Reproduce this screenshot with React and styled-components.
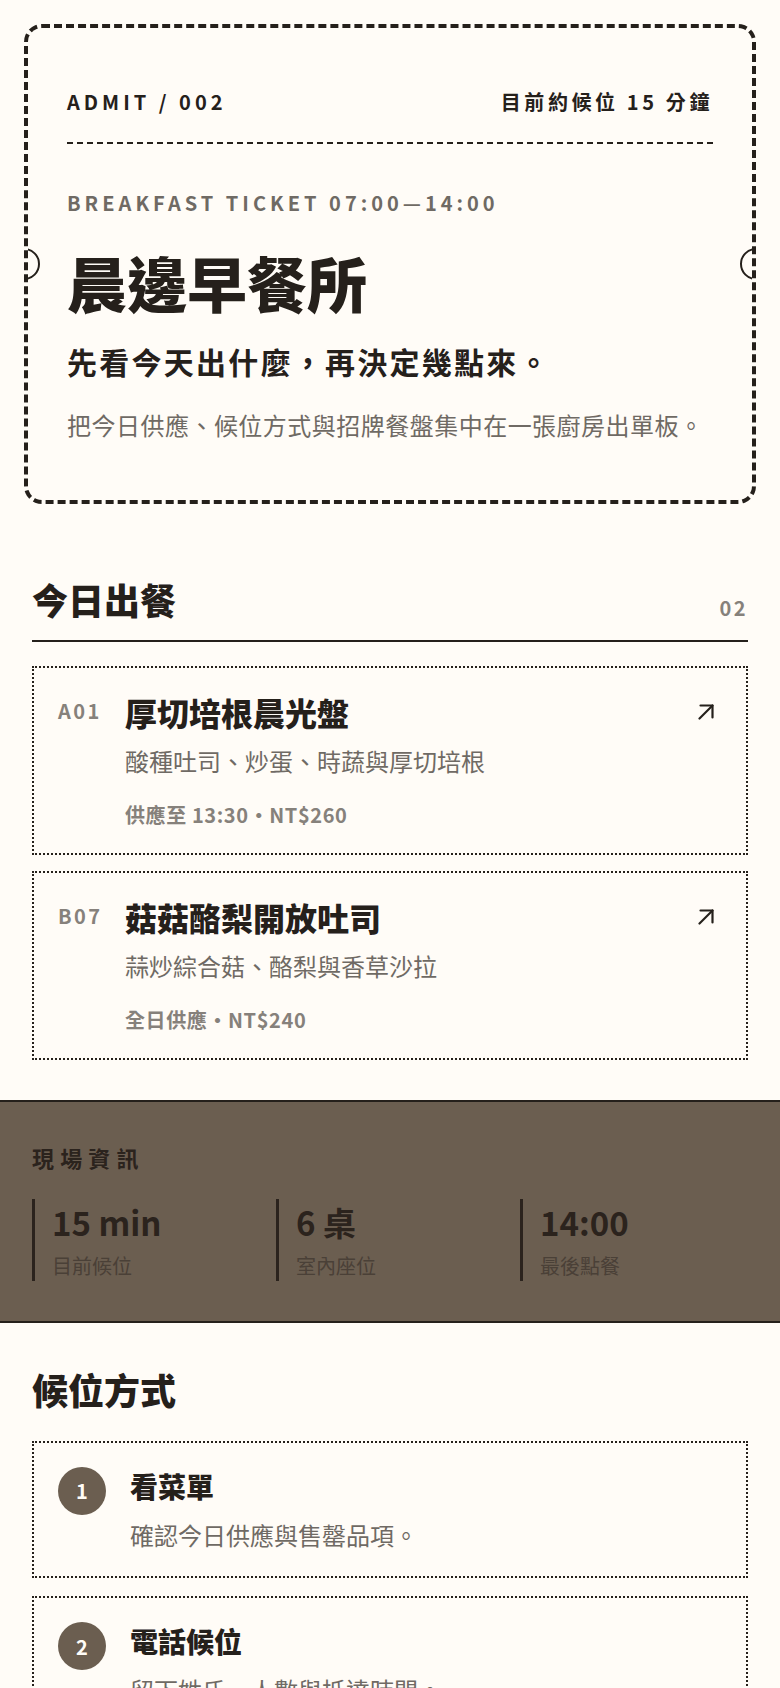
import React from 'react';
import styled, { createGlobalStyle } from 'styled-components';

const GlobalStyle = createGlobalStyle`
  * { box-sizing: border-box; }
  body {
    margin: 0;
    background: #fffcf7;
    color: #25201b;
    font-family: "Noto Sans CJK TC", "Noto Sans", sans-serif;
  }
  h1, h2, h3, p { margin: 0; }
`;

const Page = styled.main`
  width: 100%;
`;

const Hero = styled.header`
  padding: 24px 24px 24px;
`;

const Ticket = styled.div`
  position: relative;
  overflow: hidden;
  border: 4px dashed #25201b;
  border-radius: 18px;
  padding: 59px 39px 56px;
`;

const Notch = styled.span`
  position: absolute;
  top: 50%;
  ${(p) => (p.side === 'left' ? 'left: -20px;' : 'right: -20px;')}
  width: 32px;
  height: 32px;
  margin-top: -16px;
  border: 2px solid #25201b;
  border-radius: 50%;
  background: #fffcf7;
`;

const TicketHead = styled.div`
  display: flex;
  justify-content: space-between;
  align-items: center;
  padding-bottom: 25px;
  border-bottom: 2px dashed #25201b;
  font-size: 20px;
  line-height: 1.5;
  font-weight: 700;
`;

const Admit = styled.span`
  letter-spacing: 0.2em;
`;

const Wait = styled.span`
  letter-spacing: 0.18em;
`;

const Eyebrow = styled.p`
  margin-top: 44px;
  font-size: 20px;
  line-height: 1.5;
  font-weight: 700;
  letter-spacing: 0.2em;
  color: #6f6a64;
`;

const Title = styled.h1`
  margin-top: 29px;
  font-size: 60px;
  line-height: 1.15;
  font-weight: 900;
`;

const Subtitle = styled.h2`
  margin-top: 24px;
  font-size: 30px;
  line-height: 1.4;
  font-weight: 700;
  letter-spacing: 0.075em;
`;

const Lead = styled.p`
  margin-top: 24px;
  font-size: 24px;
  line-height: 1.6;
  letter-spacing: 0.02em;
  color: #6f6a64;
`;

const Section = styled.section`
  padding: ${(p) => p.top || 48}px 32px ${(p) => p.bottom || 40}px;
`;

const SectionHead = styled.div`
  display: flex;
  justify-content: space-between;
  align-items: flex-end;
  padding-bottom: ${(p) => (p.ruled ? '17px' : '0')};
  border-bottom: ${(p) => (p.ruled ? '2px solid #25201b' : 'none')};
  margin-bottom: ${(p) => (p.ruled ? '24px' : '28px')};
`;

const SectionTitle = styled.h2`
  font-size: 36px;
  line-height: 1.3;
  font-weight: 900;
`;

const Count = styled.span`
  font-size: 20px;
  line-height: 1.5;
  font-weight: 700;
  letter-spacing: 0.12em;
  color: #86817b;
`;

const Stack = styled.div`
  display: flex;
  flex-direction: column;
  gap: ${(p) => p.gap}px;
`;

const DishCard = styled.article`
  display: grid;
  grid-template-columns: 43px 1fr auto;
  column-gap: 24px;
  border: 2px dotted #25201b;
  padding: 24px 32px 23px 24px;
`;

const Code = styled.span`
  padding-top: 4px;
  font-size: 20px;
  line-height: 1.5;
  font-weight: 700;
  letter-spacing: 0.12em;
  color: #86817b;
`;

const DishBody = styled.div`
  display: flex;
  flex-direction: column;
`;

const DishName = styled.h3`
  font-size: 32px;
  line-height: 1.3;
  font-weight: 900;
`;

const DishDesc = styled.p`
  margin-top: 8px;
  font-size: 24px;
  line-height: 1.6;
  color: #6f6a64;
`;

const DishMeta = styled.p`
  margin-top: 20px;
  font-size: 20px;
  line-height: 1.5;
  font-weight: 700;
  letter-spacing: 0.03em;
  color: #86817b;
`;

const Arrow = styled.svg`
  margin-top: 12px;
  width: 16px;
  height: 16px;
`;

const Band = styled.section`
  background: #6b5e50;
  border-top: 2px solid #25201b;
  border-bottom: 2px solid #25201b;
  padding: 39px 32px 40px;
`;

const BandTitle = styled.h2`
  font-size: 22px;
  line-height: 1.5;
  font-weight: 700;
  letter-spacing: 0.28em;
  color: #2b231d;
`;

const Stats = styled.div`
  display: grid;
  grid-template-columns: repeat(3, 1fr);
  gap: 16px;
  margin-top: 25px;
`;

const Stat = styled.div`
  border-left: 3px solid #2b231d;
  padding: 4px 0 0 17px;
`;

const StatValue = styled.div`
  font-size: 33px;
  line-height: 1.2;
  font-weight: 700;
  color: #2b231d;
`;

const StatLabel = styled.div`
  margin-top: 8px;
  font-size: 20px;
  line-height: 1.5;
  color: #4a4037;
`;

const StepCard = styled.article`
  display: grid;
  grid-template-columns: 48px 1fr;
  column-gap: 24px;
  border: 2px dotted #25201b;
  padding: 24px 24px 22px;
`;

const StepNo = styled.span`
  width: 48px;
  height: 48px;
  border-radius: 50%;
  background: #6b5e50;
  color: #fffcf7;
  display: flex;
  align-items: center;
  justify-content: center;
  font-size: 20px;
  font-weight: 700;
`;

const StepTitle = styled.h3`
  font-size: 28px;
  line-height: 1.4;
  font-weight: 900;
`;

const StepDesc = styled.p`
  margin-top: 10px;
  font-size: 24px;
  line-height: 1.6;
  color: #6f6a64;
`;

const dishes = [
  { code: 'A01', name: '厚切培根晨光盤', desc: '酸種吐司、炒蛋、時蔬與厚切培根', meta: '供應至 13:30・NT$260' },
  { code: 'B07', name: '菇菇酪梨開放吐司', desc: '蒜炒綜合菇、酪梨與香草沙拉', meta: '全日供應・NT$240' },
];

const stats = [
  { value: '15 min', label: '目前候位' },
  { value: '6 桌', label: '室內座位' },
  { value: '14:00', label: '最後點餐' },
];

const steps = [
  { title: '看菜單', desc: '確認今日供應與售罄品項。' },
  { title: '電話候位', desc: '留下姓氏、人數與抵達時間。' },
];

function ArrowIcon() {
  return (
    <Arrow viewBox="0 0 16 16" fill="none" stroke="#25201b" strokeWidth="2.2" strokeLinecap="round" strokeLinejoin="round">
      <path d="M1.5 14.5 14.5 1.5" />
      <path d="M2.5 1.5h12v12" />
    </Arrow>
  );
}

export default function App() {
  return (
    <Page>
      <GlobalStyle />
      <Hero>
        <Ticket>
          <Notch side="left" />
          <Notch side="right" />
          <TicketHead>
            <Admit>ADMIT / 002</Admit>
            <Wait>目前約候位 15 分鐘</Wait>
          </TicketHead>
          <Eyebrow>BREAKFAST TICKET 07:00—14:00</Eyebrow>
          <Title>晨邊早餐所</Title>
          <Subtitle>先看今天出什麼，再決定幾點來。</Subtitle>
          <Lead>把今日供應、候位方式與招牌餐盤集中在一張廚房出單板。</Lead>
        </Ticket>
      </Hero>

      <Section>
        <SectionHead ruled>
          <SectionTitle>今日出餐</SectionTitle>
          <Count>02</Count>
        </SectionHead>
        <Stack gap={16}>
          {dishes.map((d) => (
            <DishCard key={d.code}>
              <Code>{d.code}</Code>
              <DishBody>
                <DishName>{d.name}</DishName>
                <DishDesc>{d.desc}</DishDesc>
                <DishMeta>{d.meta}</DishMeta>
              </DishBody>
              <ArrowIcon />
            </DishCard>
          ))}
        </Stack>
      </Section>

      <Band>
        <BandTitle>現場資訊</BandTitle>
        <Stats>
          {stats.map((s) => (
            <Stat key={s.label}>
              <StatValue>{s.value}</StatValue>
              <StatLabel>{s.label}</StatLabel>
            </Stat>
          ))}
        </Stats>
      </Band>

      <Section top={43} bottom={48}>
        <SectionHead>
          <SectionTitle>候位方式</SectionTitle>
        </SectionHead>
        <Stack gap={18}>
          {steps.map((s, i) => (
            <StepCard key={s.title}>
              <StepNo>{i + 1}</StepNo>
              <div>
                <StepTitle>{s.title}</StepTitle>
                <StepDesc>{s.desc}</StepDesc>
              </div>
            </StepCard>
          ))}
        </Stack>
      </Section>
    </Page>
  );
}
